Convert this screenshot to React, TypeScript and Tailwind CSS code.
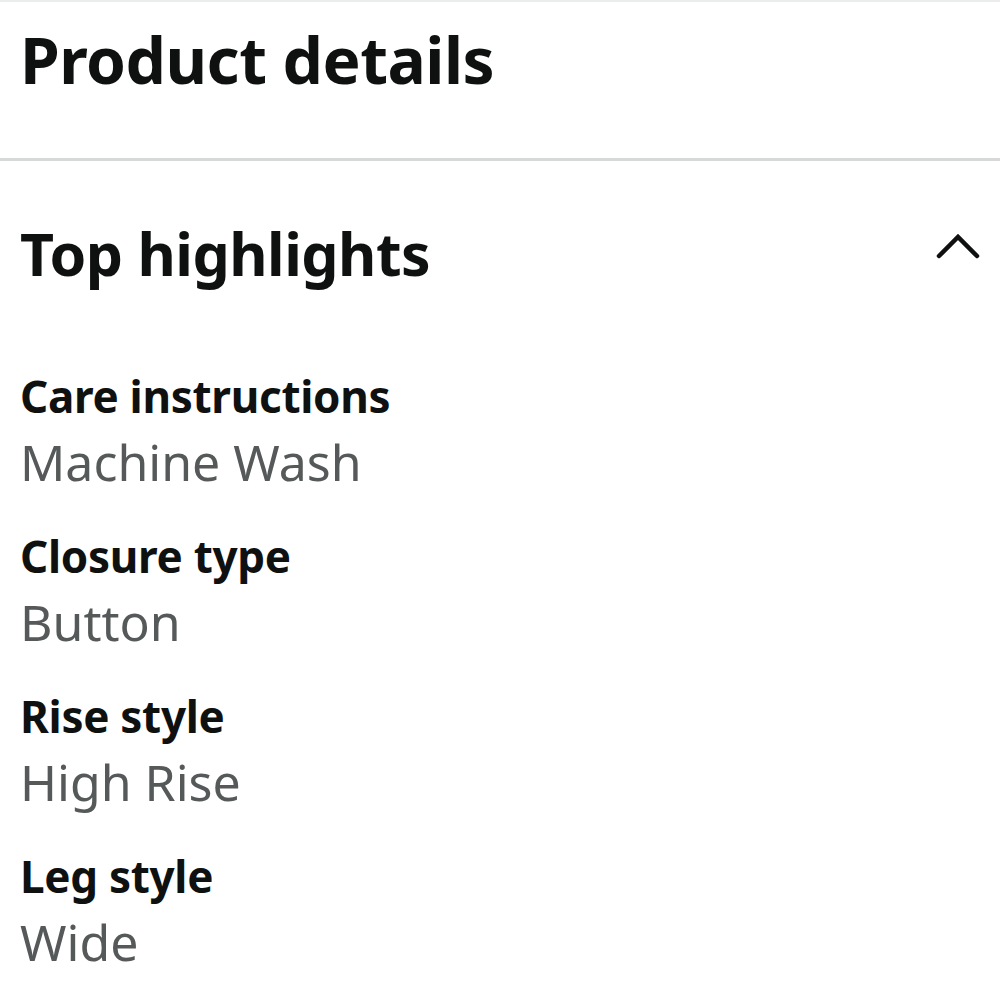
import React from 'react';

const highlights = [
  { label: 'Care instructions', value: 'Machine Wash' },
  { label: 'Closure type', value: 'Button' },
  { label: 'Rise style', value: 'High Rise' },
  { label: 'Leg style', value: 'Wide' },
];

const App: React.FC = () => {
  return (
    <div className="w-[1000px] h-[1000px] overflow-hidden bg-white font-['Noto_Sans',sans-serif] text-[#0f1111]">
      <div className="h-[2px] bg-[#eaeded]"></div>
      <div className="h-[156px] px-5 pt-[18px]">
        <h1 className="text-[64px] font-bold leading-[80px] tracking-[-0.5px]">Product details</h1>
      </div>
      <div className="h-[3px] bg-[#d5d9d9]"></div>

      <div className="px-5">
        <div className="flex items-start justify-between pt-[56px] pb-[79px]">
          <h2 className="text-[59px] font-bold leading-[72px] tracking-[-0.5px]">Top highlights</h2>
          <svg width="48" height="32" viewBox="0 0 48 32" className="mt-[12px] -mr-[2px]">
            <path d="M5 27 L24 8 L43 27" fill="none" stroke="#0f1111" strokeWidth="4.5" strokeLinecap="round" strokeLinejoin="miter" />
          </svg>
        </div>

        <div className="flex flex-col">
          {highlights.map((h) => (
            <div key={h.label} className="h-[160px]">
              <div className="text-[44px] font-bold leading-[56px] tracking-[-0.3px]">{h.label}</div>
              <div className="mt-[6px] text-[50px] leading-[64px] text-[#565959]">{h.value}</div>
            </div>
          ))}
        </div>
      </div>
      <div className="h-[2px] bg-[#eaeded]"></div>
    </div>
  );
};

export default App;
